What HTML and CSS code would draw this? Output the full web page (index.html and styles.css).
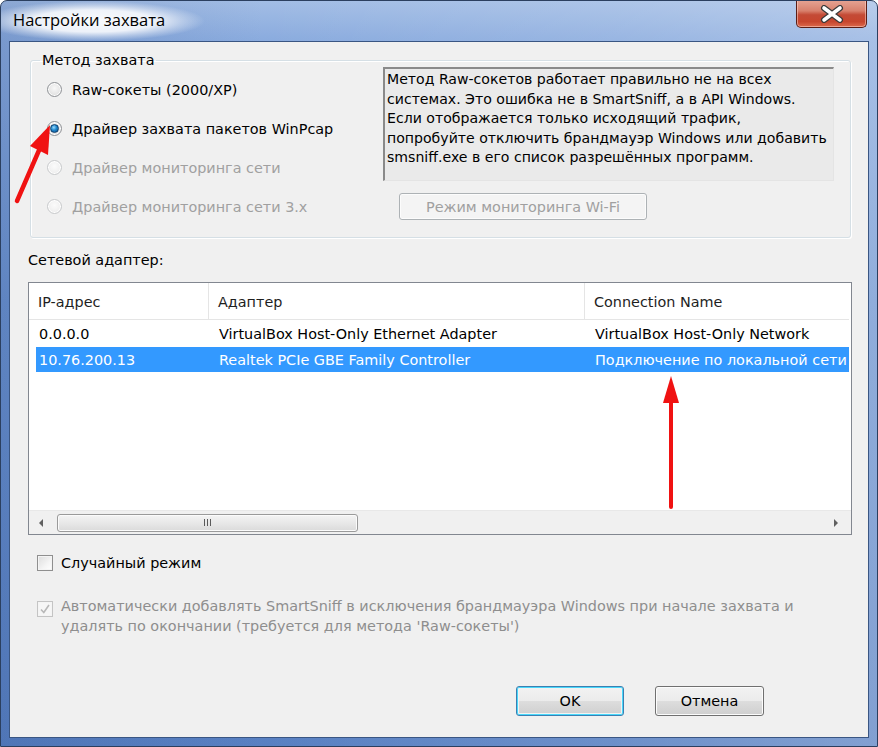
FILE: index.html
```html
<!DOCTYPE html>
<html lang="ru">
<head>
<meta charset="utf-8">
<title>Настройки захвата</title>
<link rel="stylesheet" href="styles.css">
</head>
<body>
<div class="window">
  <div class="titlebar">
    <span class="title">Настройки захвата</span>
    <div class="close">
      <svg width="24" height="18" viewBox="0 0 24 18">
        <path d="M4 3 L20 15 M20 3 L4 15" stroke="#3a3a3a" stroke-width="6" stroke-linecap="round"/>
        <path d="M4 3 L20 15 M20 3 L4 15" stroke="#ffffff" stroke-width="3.6" stroke-linecap="round"/>
      </svg>
    </div>
  </div>
  <div class="client">
    <fieldset class="group">
      <legend>Метод захвата</legend>
      <div class="group-body">
        <div class="radios">
          <div class="radio"><span class="rb"></span><span>Raw-сокеты (2000/XP)</span></div>
          <div class="radio"><span class="rb checked"></span><span>Драйвер захвата пакетов WinPcap</span></div>
          <div class="radio disabled"><span class="rb"></span><span>Драйвер мониторинга сети</span></div>
          <div class="radio disabled"><span class="rb"></span><span>Драйвер мониторинга сети 3.x</span></div>
        </div>
        <div class="info-col">
          <div class="infobox">Метод Raw-сокетов работает правильно не на всех<br>системах. Это ошибка не в SmartSniff, а в API Windows.<br>Если отображается только исходящий трафик,<br>попробуйте отключить брандмауэр Windows или добавить<br>smsniff.exe в его список разрешённых программ.</div>
          <div class="btn btn-disabled wifi">Режим мониторинга Wi-Fi</div>
        </div>
      </div>
    </fieldset>

    <div class="section-label">Сетевой адаптер:</div>

    <div class="list">
      <div class="list-head">
        <div class="hc c1">IP-адрес</div>
        <div class="hc c2">Адаптер</div>
        <div class="hc c3">Connection Name</div>
      </div>
      <div class="rows">
        <div class="row">
          <div class="cell c1">0.0.0.0</div>
          <div class="cell c2">VirtualBox Host-Only Ethernet Adapter</div>
          <div class="cell c3">VirtualBox Host-Only Network</div>
        </div>
        <div class="row sel">
          <div class="cell c1">10.76.200.13</div>
          <div class="cell c2">Realtek PCIe GBE Family Controller</div>
          <div class="cell c3">Подключение по локальной сети</div>
        </div>
      </div>
      <div class="hscroll">
        <span class="sb-arrow left"></span>
        <div class="sb-track">
          <div class="sb-thumb"><span class="grip"></span></div>
        </div>
        <span class="sb-arrow right"></span>
      </div>
    </div>

    <div class="check">
      <span class="cb"></span>
      <span>Случайный режим</span>
    </div>
    <div class="check disabled multi">
      <span class="cb checked">
        <svg width="12" height="12" viewBox="0 0 12 12"><path d="M2 6.5 L4.8 9.5 L10 2" fill="none" stroke="#b8b8b8" stroke-width="1.6"/></svg>
      </span>
      <span>Автоматически добавлять SmartSniff в исключения брандмауэра Windows при начале захвата и<br>удалять по окончании (требуется для метода 'Raw-сокеты')</span>
    </div>

    <div class="buttons">
      <div class="btn default">OK</div>
      <div class="btn">Отмена</div>
    </div>
  </div>

  <svg class="arrows" width="878" height="747" viewBox="0 0 878 747">
    <line x1="17" y1="201" x2="40" y2="148" stroke="#f01212" stroke-width="4.5" stroke-linecap="round"/>
    <polygon points="50,125 48,155 30,146" fill="#f01212"/>
    <line x1="671" y1="507" x2="671" y2="398" stroke="#f01212" stroke-width="4" stroke-linecap="round"/>
    <polygon points="671,376 679,403 663,403" fill="#f01212"/>
  </svg>
</div>
</body>
</html>
```

FILE: styles.css
```css
* { box-sizing: border-box; }

html, body {
  margin: 0;
  padding: 0;
  background: #ffffff;
}

.window {
  position: relative;
  width: 878px;
  height: 747px;
  display: flex;
  flex-direction: column;
  border: 1px solid #2b3f5f;
  border-radius: 7px 7px 0 0;
  background:
    linear-gradient(90deg, rgba(40,70,130,0.18) 0%, rgba(255,255,255,0) 30%, rgba(255,255,255,0.12) 70%, rgba(255,255,255,0.25) 100%),
    linear-gradient(180deg, #a2bde5 0px, #8aabde 40px, #6b92cf 300px, #5880c2 747px);
  font-family: "DejaVu Sans", Verdana, sans-serif;
  font-size: 14.4px;
  color: #000;
  overflow: hidden;
}

.titlebar {
  height: 40px;
  flex: none;
  display: flex;
  align-items: flex-start;
  justify-content: space-between;
}

.title {
  margin: 0 0 0 -20px;
  padding: 9px 40px 11px 32px;
  font-family: "Open Sans", "Noto Sans", sans-serif;
  font-size: 16.5px;
  line-height: 20px;
  color: #000;
  background: radial-gradient(closest-side, rgba(255,255,255,0.95) 0%, rgba(255,255,255,0.85) 55%, rgba(255,255,255,0.35) 80%, rgba(255,255,255,0) 100%);
}

.close {
  width: 71px;
  height: 28px;
  margin: -1px 10px 0 0;
  border: 1px solid #5b1e16;
  border-top: none;
  border-radius: 0 0 5px 5px;
  background: linear-gradient(180deg, #e6a595 0%, #d8816d 40%, #c44b36 55%, #c7462e 80%, #dc6a4d 100%);
  box-shadow: inset 0 0 0 1px rgba(255,220,210,0.5);
  display: flex;
  align-items: center;
  justify-content: center;
}

.client {
  flex: none;
  height: 697px;
  margin: 0 8px 0 8px;
  border: 1px solid #3a5683;
  background: #f0f0f0;
  display: flex;
  flex-direction: column;
}

/* Group box */
.group {
  margin: 9px 0 0 20px;
  width: 821px;
  padding: 0 0 11px 0;
  border: 1px solid #d5dfe5;
  border-radius: 3px;
  box-shadow: inset 1px 1px 0 #ffffff, 1px 1px 0 #ffffff;
  min-width: 0;
}

.group legend {
  margin-left: 9px;
  padding: 0 2px;
  line-height: 18px;
}

.group-body {
  display: flex;
}

.radios {
  width: 352px;
  padding-left: 16px;
  padding-top: 1px;
  display: flex;
  flex-direction: column;
}

.radio {
  height: 39px;
  display: flex;
  align-items: center;
  gap: 10px;
}

.radio.disabled { color: #a0a0a0; }

.rb {
  width: 15px;
  height: 15px;
  flex: none;
  border-radius: 50%;
  border: 1px solid #8f9296;
  background: radial-gradient(circle at 50% 40%, #f8f8f8 0%, #e6e6e6 55%, #d4d4d4 100%);
  box-shadow: inset 0 0 0 1px #ffffff;
  position: relative;
}

.radio.disabled .rb {
  border-color: #c8cacc;
  background: radial-gradient(circle at 50% 40%, #fbfbfb 0%, #f0f0f0 60%, #e8e8e8 100%);
}

.rb.checked::after {
  content: "";
  position: absolute;
  left: 2px;
  top: 2px;
  width: 7px;
  height: 7px;
  border-radius: 50%;
  background: radial-gradient(circle at 40% 35%, #9bdcff 0%, #1e86cc 45%, #0d4f8a 100%);
  border: 1px solid #0e3f6e;
  box-sizing: content-box;
}

.info-col {
  margin-top: -2px;
  display: flex;
  flex-direction: column;
  align-items: flex-start;
}

.infobox {
  width: 451px;
  height: 114px;
  padding: 1px 2px 0 2px;
  border-top: 2px solid #8a8a8a;
  border-left: 2px solid #8a8a8a;
  border-right: 1px solid #e4e4e4;
  border-bottom: 1px solid #e4e4e4;
  background: #eaeaea;
  font-size: 14.1px;
  line-height: 19.6px;
  white-space: nowrap;
}

.btn {
  height: 30px;
  border: 1px solid #707070;
  border-radius: 3px;
  background: linear-gradient(180deg, #f2f2f2 0%, #ebebeb 50%, #dddddd 51%, #cfcfcf 100%);
  box-shadow: inset 0 0 0 1px #fcfcfc;
  display: flex;
  align-items: center;
  justify-content: center;
}

.btn-disabled {
  border-color: #adb2b5;
  background: #f4f4f4;
  color: #a0a0a0;
}

.wifi {
  margin: 12px 0 0 16px;
  width: 248px;
  height: 27px;
}

/* Adapter list */
.section-label {
  margin: 13px 0 0 18px;
  line-height: 18px;
}

.list {
  margin: 13px 0 0 18px;
  width: 824px;
  height: 253px;
  border: 1px solid #828790;
  background: #ffffff;
  display: flex;
  flex-direction: column;
}

.list-head {
  height: 37px;
  flex: none;
  display: flex;
  border-bottom: 1px solid #e5e5e5;
  margin-right: 2px;
}

.hc {
  display: flex;
  align-items: center;
  padding-left: 9px;
  padding-top: 2px;
  border-right: 1px solid #e5e5e5;
  color: #1e1e1e;
}

.hc.c1 { width: 180px; }
.hc.c2 { width: 376px; }
.hc.c3 { flex: 1; border-right: none; }

.rows {
  flex: 1;
  padding: 1px 2px 0 7px;
}

.row {
  height: 26px;
  display: flex;
  align-items: center;
  white-space: nowrap;
}

.row.sel {
  height: 25px;
  background: #3399ff;
  color: #ffffff;
}

.cell.c1 { width: 173px; padding-left: 3px; }
.cell.c2 { width: 376px; padding-left: 10px; }
.cell.c3 { flex: 1; padding-left: 10px; overflow: hidden; }

.hscroll {
  height: 24px;
  flex: none;
  display: flex;
  align-items: center;
  background: #f0f0f0;
  border-top: 1px solid #e8e8e8;
}

.sb-arrow {
  width: 0;
  height: 0;
  flex: none;
  border-top: 4px solid transparent;
  border-bottom: 4px solid transparent;
}
.sb-arrow.left { margin-left: 10px; border-right: 4px solid #606060; }
.sb-arrow.right { margin-right: 13px; border-left: 4px solid #606060; }

.sb-track {
  flex: 1;
  height: 100%;
  display: flex;
  align-items: center;
  padding-left: 14px;
}

.sb-thumb {
  width: 301px;
  height: 18px;
  border: 1px solid #9a9a9a;
  border-radius: 3px;
  background: linear-gradient(180deg, #f4f4f4 0%, #e8e8e8 50%, #dadada 100%);
  box-shadow: inset 0 0 0 1px #fbfbfb;
  display: flex;
  align-items: center;
  justify-content: center;
}

.grip {
  width: 8px;
  height: 7px;
  background: repeating-linear-gradient(90deg, #5a5a5a 0 1px, transparent 1px 3px);
}

/* Checkboxes */
.check {
  margin: 19px 0 0 27px;
  display: flex;
  align-items: center;
  gap: 8px;
  line-height: 18px;
}

.check.multi {
  margin-top: 24px;
  align-items: flex-start;
  line-height: 20px;
}

.check.disabled { color: #8e8e8e; }

.cb {
  width: 16px;
  height: 16px;
  flex: none;
  border: 1px solid #8f8f8f;
  background: linear-gradient(135deg, #dcdcdc 0%, #f4f4f4 60%, #ffffff 100%);
  box-shadow: inset 0 0 0 1px #f4f4f4;
  display: flex;
  align-items: center;
  justify-content: center;
}

.check.multi .cb {
  margin-top: 5px;
  border-color: #c4c4c4;
  background: #f6f6f6;
}

.buttons {
  margin: 50px 0 0 506px;
  display: flex;
  gap: 31px;
}

.buttons .btn { width: 108px; }
.buttons .btn + .btn { width: 109px; }

.btn.default {
  border-color: #3c7fb1;
  box-shadow: inset 0 0 0 1px #48d8fb, inset 0 0 0 2px #f2f2f2;
}

/* Annotation arrows over the screenshot */
.arrows {
  position: absolute;
  left: -1px;
  top: -1px;
  pointer-events: none;
}
```
